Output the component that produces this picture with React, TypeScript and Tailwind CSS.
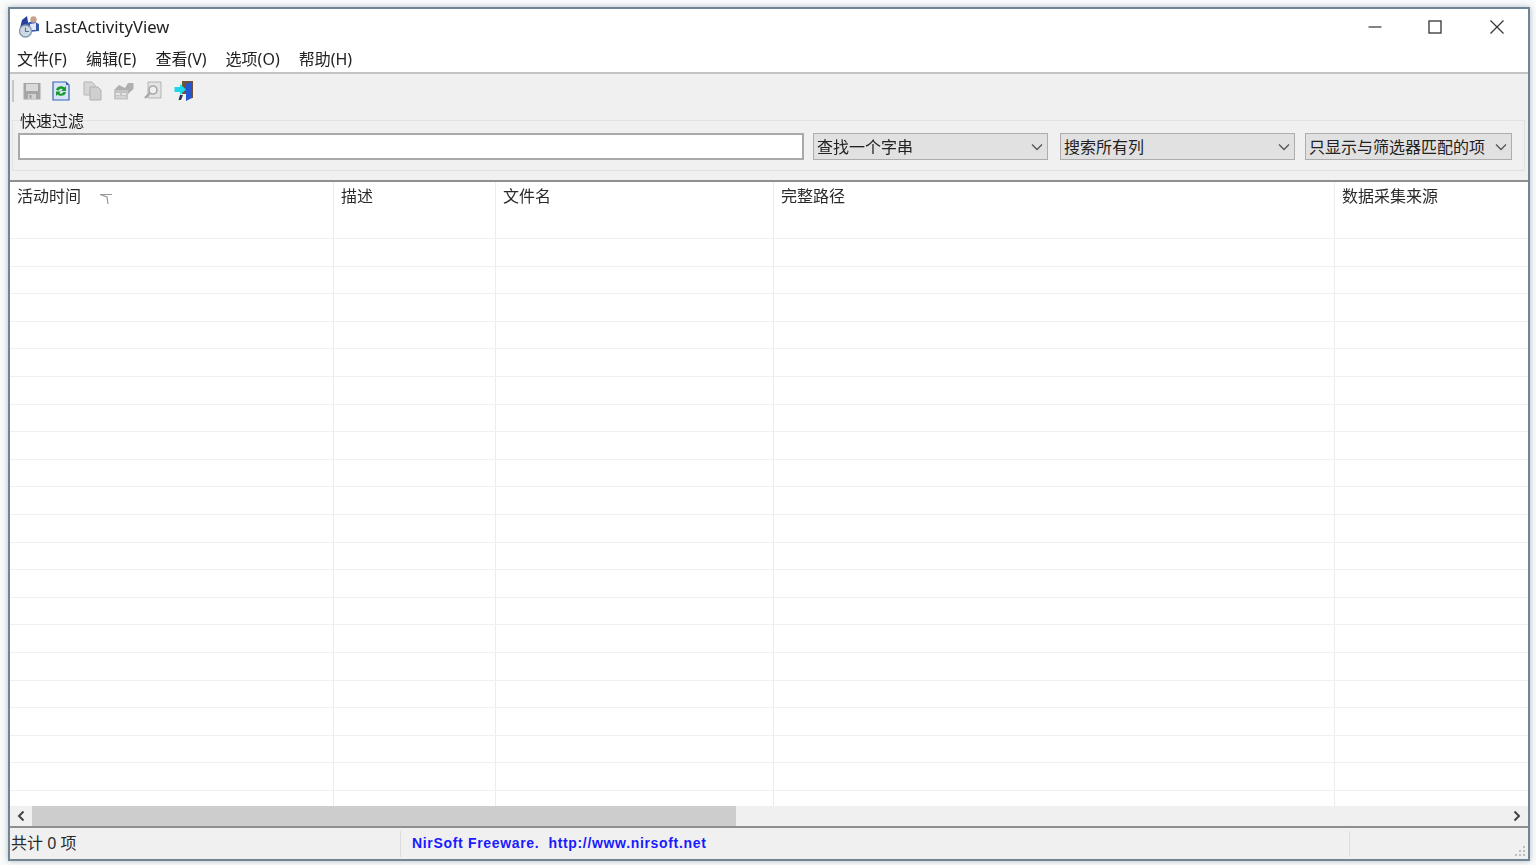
const rows = Array.from({ length: 21 });

const columns = [
  { title: '活动时间', width: 'w-[324px]', sort: true },
  { title: '描述', width: 'w-[162px]' },
  { title: '文件名', width: 'w-[278px]' },
  { title: '完整路径', width: 'w-[561px]' },
  { title: '数据采集来源', width: 'flex-1' },
];

const cjk = "font-['Noto_Sans','Noto_Sans_CJK_SC',sans-serif]";

const AppIcon = () => (
  <svg width="22" height="23" viewBox="0 0 22 23">
    <path d="M2 13 L4 5 L9 1 L11 13 L6 16 Z" fill="#27409a" />
    <path d="M9 8 L15 6 L21 9 L21 16 L11 17 Z" fill="#3656b0" />
    <circle cx="15.5" cy="4.5" r="3.2" fill="#c9a08e" />
    <path d="M12 9 L18 8 L18 15 L12 15 Z" fill="#dfe6f4" />
    <circle cx="7.5" cy="16" r="6" fill="#cfd9e4" stroke="#7d96b0" strokeWidth="1.3" />
    <path d="M7.5 12.5 V16.5 H11" fill="none" stroke="#5b7391" strokeWidth="1.1" />
  </svg>
);

const SaveIcon = () => (
  <svg width="18" height="18" viewBox="0 0 18 18">
    <path d="M0.5 1 H17.5 V17.5 H0.5 Z" fill="#a6a6a6" />
    <path d="M3 2 H15 V9 H3 Z" fill="#dadada" />
    <path d="M5 12 H13 V17 H5 Z" fill="#d2d2d2" />
    <path d="M6.5 13 H8.5 V16.5 H6.5 Z" fill="#9c9c9c" />
  </svg>
);

const RefreshIcon = () => (
  <svg width="18" height="20" viewBox="0 0 18 20">
    <path d="M1 1 H14 L17 4 V19 H1 Z" fill="#d9e5f7" stroke="#3c62b5" strokeWidth="1.2" />
    <path d="M14 1 L17 4 H14 Z" fill="#3c62b5" />
    <path d="M4 9 C4.5 5 10 4 12.5 6.5 L14 5 V10 H9 L10.8 8.4 C9.5 7.2 7.5 7.6 6.8 9.5 Z" fill="#169c2a" />
    <path d="M14 11 C13.5 15 8 16 5.5 13.5 L4 15 V10.5 H9 L7.2 12.1 C8.5 13.3 10.6 12.8 11.2 11 Z" fill="#169c2a" />
  </svg>
);

const CopyIcon = () => (
  <svg width="19" height="20" viewBox="0 0 19 20">
    <path d="M1 1 H9 L12 4 V14 H1 Z" fill="#d6d6d6" stroke="#b5b5b5" />
    <path d="M7 6 H15 L18 9 V19 H7 Z" fill="#cfcfcf" stroke="#b0b0b0" />
  </svg>
);

const PropsIcon = () => (
  <svg width="21" height="18" viewBox="0 0 21 18">
    <path d="M1 8 H15 V17.5 H1 Z" fill="#c4c4c4" />
    <path d="M1 8 L6 3 L12 6 L15 1 L20.5 1 L20.5 7 L15 12 V8 Z" fill="#b0b0b0" />
    <path d="M3 11 H7 V13 H3 Z M9 11 H13 V13 H9 Z M3 14.5 H13 V15.5 H3 Z" fill="#e6e6e6" />
  </svg>
);

const FindIcon = () => (
  <svg width="19" height="19" viewBox="0 0 19 19">
    <path d="M5 1 H18 V17 H5 Z" fill="#e3e3e3" stroke="#b5b5b5" />
    <circle cx="10" cy="9" r="4" fill="#efefef" stroke="#a8a8a8" strokeWidth="1.6" />
    <path d="M7 12 L2 17" stroke="#a8a8a8" strokeWidth="2.4" />
  </svg>
);

const ExitIcon = () => (
  <svg width="20" height="22" viewBox="0 0 20 22">
    <path d="M8 1 H19 V18 H15 V14 H8 Z" fill="#6f5236" />
    <path d="M12 4 L18 1.5 V18 L12 21 Z" fill="#2456d0" />
    <path d="M6 4 V7 H0.5 V12 H6 V15 L12 9.5 Z" fill="#1fd7ea" />
    <path d="M6 15 L4.5 20 H7 L9 15 Z" fill="#2b3550" />
  </svg>
);

const Chevron = () => (
  <svg width="14" height="14" viewBox="0 0 14 14" className="shrink-0">
    <path d="M2 4.5 L7 9.5 L12 4.5" fill="none" stroke="#555" strokeWidth="1.3" />
  </svg>
);

const Select = ({ label, width }: { label: string; width: string }) => (
  <div className={`${width} h-[27px] flex items-center justify-between pl-[3px] pr-[3px] bg-[#e1e1e1] border border-[#adadad] text-[16px] text-[#222] whitespace-nowrap`}>
    <span>{label}</span>
    <Chevron />
  </div>
);

export default function App() {
  return (
    <div className={`w-[1536px] h-[865px] overflow-hidden bg-[#fafbfb] pl-2 pr-[6px] pt-[7px] pb-1 ${cjk}`}>
      <div className="h-full flex flex-col bg-white border-2 border-[#6f8596] shadow-[0_0_6px_rgba(90,110,130,0.45)] blur-[0.6px]">
        {/* title bar */}
        <div className="h-[35px] shrink-0 flex items-center pl-[8px]">
          <AppIcon />
          <span className="ml-[5px] pt-[2px] text-[16.6px] text-[#222]">LastActivityView</span>
          <div className="ml-auto flex items-center">
            <svg width="14" height="14" viewBox="0 0 14 14">
              <path d="M0.5 7 H13.5" stroke="#333" strokeWidth="1.2" />
            </svg>
            <svg width="14" height="14" viewBox="0 0 14 14" className="ml-[46px]">
              <rect x="1" y="1" width="12" height="12" fill="none" stroke="#333" strokeWidth="1.3" />
            </svg>
            <svg width="16" height="16" viewBox="0 0 16 16" className="ml-[47px] mr-[23px]">
              <path d="M1.5 1.5 L14.5 14.5 M14.5 1.5 L1.5 14.5" stroke="#333" strokeWidth="1.2" />
            </svg>
          </div>
        </div>

        {/* menu */}
        <div className="h-[30px] shrink-0 flex items-center gap-[19px] pl-[7px] pt-[2px] text-[16px] text-[#222] border-b-2 border-[#c4c4c4]">
          <span>文件(F)</span>
          <span>编辑(E)</span>
          <span>查看(V)</span>
          <span>选项(O)</span>
          <span>帮助(H)</span>
        </div>

        {/* toolbar and filter */}
        <div className="h-[108px] shrink-0 bg-[#f0f0f0] border-b-2 border-[#8f8f8f] pl-[2px] pr-[3px]">
          <div className="h-[37px] pb-1 flex items-center">
            <div className="w-[2px] h-[22px] bg-[#c6c6c6]" />
            <div className="ml-[9px] w-[18px] flex justify-center"><SaveIcon /></div>
            <div className="ml-[11px] w-[18px] flex justify-center"><RefreshIcon /></div>
            <div className="ml-[13px] w-[19px] flex justify-center"><CopyIcon /></div>
            <div className="ml-[11px] w-[21px] flex justify-center"><PropsIcon /></div>
            <div className="ml-[9px] w-[19px] flex justify-center"><FindIcon /></div>
            <div className="ml-[12px] w-[20px] flex justify-center"><ExitIcon /></div>
          </div>
          <fieldset className="h-[60px] border border-[#e2e2e2] pl-[5px] pr-[10px]">
            <legend className="ml-[2px] h-[18px] leading-[20px] text-[16px] text-[#222]">快速过滤</legend>
            <div className="flex items-center pt-1">
              <div className="w-[786px] h-[27px] bg-white border-2 border-[#a9a9a9]" />
              <div className="ml-[9px]"><Select label="查找一个字串" width="w-[235px]" /></div>
              <div className="ml-[12px]"><Select label="搜索所有列" width="w-[235px]" /></div>
              <div className="ml-[10px]"><Select label="只显示与筛选器匹配的项" width="w-[207px]" /></div>
            </div>
          </fieldset>
        </div>

        {/* list */}
        <div className="flex-1 min-h-0 overflow-hidden bg-white text-[16px] text-[#2a2a2a]">
          <div className="h-[57px] flex border-b border-[#f0f0f0]">
            {columns.map(col => (
              <div key={col.title} className={`${col.width} shrink-0 border-r border-[#ececec] last:border-r-0 pl-[7px] pt-[2px] flex items-start`}>
                <span>{col.title}</span>
                {col.sort && (
                  <svg width="14" height="12" viewBox="0 0 14 12" className="ml-[18px] mt-[9px]">
                    <path d="M1 1.5 H13 M1 1.5 L8 4 L9 11" fill="none" stroke="#999" strokeWidth="1.2" />
                  </svg>
                )}
              </div>
            ))}
          </div>
          {rows.map((_, i) => (
            <div key={i} className="h-[27.6px] flex border-b border-[#f0f0f0]">
              {columns.map(col => (
                <div key={col.title} className={`${col.width} shrink-0 border-r border-[#ececec] last:border-r-0`} />
              ))}
            </div>
          ))}
        </div>

        {/* horizontal scrollbar */}
        <div className="h-[22px] shrink-0 flex items-center bg-[#f0f0f0] border-b-2 border-[#8f8f8f]">
          <div className="w-[22px] flex justify-center">
            <svg width="10" height="12" viewBox="0 0 10 12">
              <path d="M7.5 1.5 L3 6 L7.5 10.5" fill="none" stroke="#444" strokeWidth="2" />
            </svg>
          </div>
          <div className="w-[704px] h-full bg-[#cdcdcd]" />
          <div className="ml-auto w-[22px] flex justify-center">
            <svg width="10" height="12" viewBox="0 0 10 12">
              <path d="M2.5 1.5 L7 6 L2.5 10.5" fill="none" stroke="#444" strokeWidth="2" />
            </svg>
          </div>
        </div>

        {/* status bar */}
        <div className="h-[31px] shrink-0 flex items-center bg-[#f0f0f0] text-[16px] text-[#2a2a2a] relative">
          <div className="w-[391px] h-[26px] flex items-center pl-px pb-[2px] border-r border-[#dcdcdc] whitespace-nowrap">共计 0 项</div>
          <div className="w-[949px] h-[26px] flex items-center pl-[11px] border-r border-[#dcdcdc] font-['Liberation_Sans',sans-serif] font-bold text-[14px] tracking-[0.67px] text-[#1a1aff] whitespace-pre">
            NirSoft Freeware.  http://www.nirsoft.net
          </div>
          <svg width="12" height="12" viewBox="0 0 12 12" className="absolute right-[2px] bottom-[2px]">
            <path d="M9 1 h2 v2 h-2 z M5 5 h2 v2 h-2 z M9 5 h2 v2 h-2 z M1 9 h2 v2 h-2 z M5 9 h2 v2 h-2 z M9 9 h2 v2 h-2 z" fill="#bdbdbd" />
          </svg>
        </div>
      </div>
    </div>
  );
}
